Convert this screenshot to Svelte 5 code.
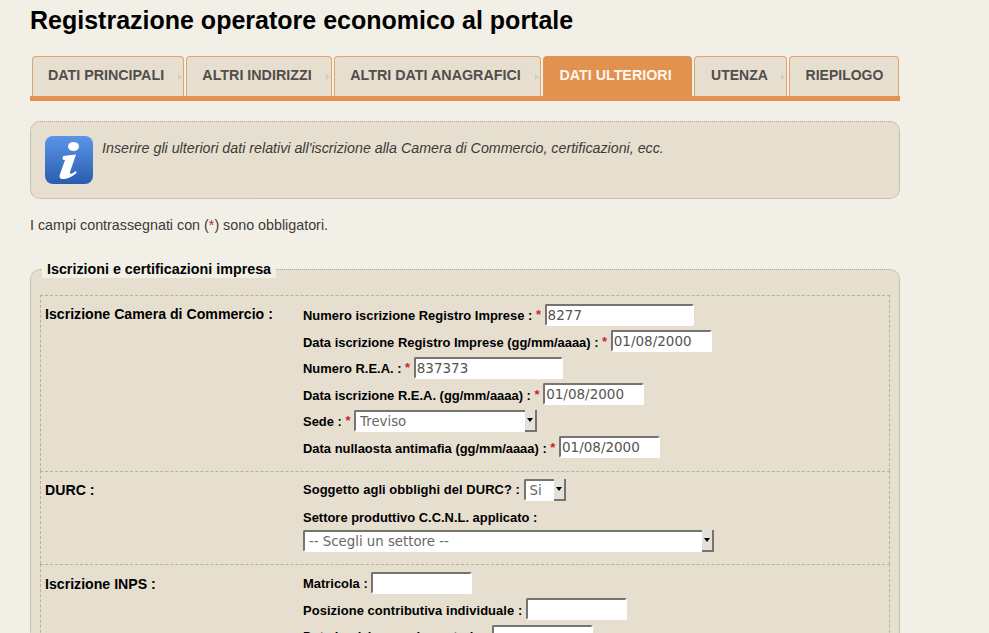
<script>
  const tabs = [
    { label: "DATI PRINCIPALI", w: 152 },
    { label: "ALTRI INDIRIZZI", w: 146 },
    { label: "ALTRI DATI ANAGRAFICI", w: 207 },
    { label: "DATI ULTERIORI", w: 149, active: true },
    { label: "UTENZA", w: 93 },
    { label: "RIEPILOGO", w: 110, last: true }
  ];
</script>

<div class="page">
  <h1>Registrazione operatore economico al portale</h1>

  <ul class="tabs">
    {#each tabs as t}
      <li class="tab" class:active={t.active} style="width:{t.w}px">
        {t.label}
        {#if !t.active && !t.last}<span class="arrow"></span>{/if}
      </li>
    {/each}
  </ul>

  <div class="info">
    <svg class="info-icon" width="48" height="48" viewBox="0 0 48 48">
      <defs>
        <linearGradient id="blue" x1="0" y1="0" x2="0" y2="1">
          <stop offset="0" stop-color="#5b95e8" />
          <stop offset="1" stop-color="#2a5cae" />
        </linearGradient>
      </defs>
      <rect width="48" height="48" rx="8" fill="url(#blue)" />
      <ellipse cx="28.5" cy="10.5" rx="5.5" ry="4.5" fill="#fff" />
      <path d="M18 20 L31 18.5 L25 36 Q24.5 38.5 27 37.5 L31 35 L31.5 37 Q24 43.5 17 43 Q13.5 42.5 15 38 L20 24 L17.5 23.5 Z" fill="#fff" />
    </svg>
    <p>Inserire gli ulteriori dati relativi all'iscrizione alla Camera di Commercio, certificazioni, ecc.</p>
  </div>

  <p class="note">I campi contrassegnati con (<span class="star">*</span>) sono obbligatori.</p>

  <fieldset>
    <legend>Iscrizioni e certificazioni impresa</legend>

    <div class="block first">
      <div class="title">Iscrizione Camera di Commercio :</div>
      <div class="fields">
        <div class="row"><b>Numero iscrizione Registro Imprese :</b> <span class="req">*</span> <input class="w150" value="8277" /></div>
        <div class="row"><b>Data iscrizione Registro Imprese (gg/mm/aaaa) :</b> <span class="req">*</span> <input class="w100" value="01/08/2000" /></div>
        <div class="row"><b>Numero R.E.A. :</b> <span class="req">*</span> <input class="w150" value="837373" /></div>
        <div class="row"><b>Data iscrizione R.E.A. (gg/mm/aaaa) :</b> <span class="req">*</span> <input class="w100" value="01/08/2000" /></div>
        <div class="row"><b>Sede :</b> <span class="req">*</span> <span class="select s-sede">Treviso<i class="btn"></i></span></div>
        <div class="row"><b>Data nullaosta antimafia (gg/mm/aaaa) :</b> <span class="req">*</span> <input class="w100" value="01/08/2000" /></div>
      </div>
    </div>

    <div class="block durc">
      <div class="title">DURC :</div>
      <div class="fields">
        <div class="row tall spaced"><b>Soggetto agli obblighi del DURC? :</b> <span class="select s-si">Si<i class="btn"></i></span></div>
        <div class="row short"><b>Settore produttivo C.C.N.L. applicato :</b></div>
        <div class="row"><span class="select s-wide">-- Scegli un settore --<i class="btn"></i></span></div>
      </div>
    </div>

    <div class="block inps">
      <div class="title">Iscrizione INPS :</div>
      <div class="fields">
        <div class="row"><b>Matricola :</b> <input class="w100" /></div>
        <div class="row spaced"><b>Posizione contributiva individuale :</b> <input class="w100" /></div>
        <div class="row"><b>Data iscrizione sede centrale :</b> <input class="w100" /></div>
      </div>
    </div>
  </fieldset>
</div>

<style>
  :global(body) {
    margin: 0;
    background: #f2efe7;
    overflow: hidden;
  }

  .page {
    height: 633px;
    overflow: hidden;
    box-sizing: border-box;
    width: 900px;
    padding: 5px 0 0 30px;
    font-family: "Liberation Sans", Arial, sans-serif;
    font-size: 14.3px;
    color: #3c3a37;
  }

  h1 {
    margin: 0;
    font-size: 25px;
    line-height: 30px;
    color: #000;
  }

  .tabs {
    display: flex;
    gap: 2px;
    list-style: none;
    margin: 21px 0 0;
    padding: 0 0 0 2px;
    border-bottom: 5px solid #e2914f;
    height: 40px;
  }

  .tab {
    position: relative;
    box-sizing: border-box;
    height: 40px;
    line-height: 37px;
    text-align: center;
    padding-right: 4px;
    border: 1px solid #e2a46f;
    border-bottom: 0;
    border-radius: 4px 4px 0 0;
    background: #e6dfcf;
    font-weight: bold;
    color: #514e4b;
    white-space: nowrap;
  }

  .tab:nth-child(5) {
    padding-right: 2px;
    font-size: 14px;
  }

  .tab:nth-child(6) {
    padding-right: 0;
    padding-left: 1px;
    font-size: 14px;
  }

  .tab.active {
    background: #e2914f;
    border-color: #e2914f;
    color: #fdf6ea;
  }

  .arrow {
    position: absolute;
    right: 1px;
    top: 17px;
    border-left: 4px solid #d2cdc4;
    border-top: 3px solid transparent;
    border-bottom: 3px solid transparent;
  }

  .info {
    display: flex;
    gap: 9px;
    box-sizing: border-box;
    height: 78px;
    margin-top: 20px;
    padding: 14px 14px;
    background: #e6dfcf;
    border: 1px dotted #a8a294;
    border-radius: 10px;
  }

  .info-icon {
    flex: none;
  }

  .info p {
    margin: 4px 0 0;
    font-size: 14.25px;
    font-style: italic;
    line-height: 16px;
    color: #3c3a37;
  }

  .note {
    margin: 18px 0 0;
    line-height: 16px;
  }

  .star {
    color: #c8242b;
  }

  fieldset {
    margin: 27px 0 0;
    padding: 0 9px;
    min-width: 0;
    background: #e6dfcf;
    border: 1px dotted #a8a294;
    border-radius: 10px;
  }

  legend {
    margin-left: 2px;
    padding: 0 5px;
    background: #f2efe7;
    font-weight: bold;
    line-height: 18px;
    color: #000;
  }

  .block {
    display: flex;
    box-sizing: border-box;
    border: 1px dashed #b5af9f;
    border-bottom: 0;
    padding: 0 4px;
  }

  .first {
    margin-top: 17px;
    height: 176px;
    padding-top: 7px;
  }

  .durc {
    height: 93px;
    padding-top: 5px;
  }

  .inps {
    height: 200px;
    padding-top: 6px;
  }

  .title {
    flex: none;
    width: 258px;
    margin-top: 4px;
    font-size: 14.15px;
    font-weight: bold;
    color: #000;
    line-height: 18px;
  }

  .first .title {
    margin-top: 2px;
  }

  .fields {
    font-size: 12.95px;
    color: #000;
  }

  .row {
    height: 26.5px;
    line-height: 24px;
    white-space: nowrap;
  }

  .row b {
    vertical-align: -1px;
  }

  .row.tall {
    height: 28px;
  }

  .row.short {
    height: 24px;
  }

  .row.spaced b {
    letter-spacing: 0.06px;
  }

  .req {
    color: #c8242b;
    font-weight: bold;
  }

  input, .select {
    box-sizing: border-box;
    display: inline-block;
    height: 22px;
    margin-bottom: 2px;
    padding: 0 1px;
    vertical-align: middle;
    background: #fff;
    border: 2px solid;
    border-color: #767470 #fff #fff #767470;
    border-radius: 2px;
    font-family: "DejaVu Sans", sans-serif;
    font-size: 13.5px;
    color: #55534f;
    outline: none;
  }

  .w150 {
    width: 149px;
  }

  .w100 {
    width: 101px;
  }

  .select {
    position: relative;
    font-size: 13.3px;
    line-height: 19px;
    padding-left: 4px;
    color: #6a6864;
  }

  .s-sede {
    width: 183px;
  }

  .s-si {
    width: 42px;
    margin-bottom: 0;
  }

  .s-wide {
    width: 411px;
  }

  .btn {
    position: absolute;
    right: -2px;
    top: -2px;
    bottom: -2px;
    width: 12px;
    box-sizing: border-box;
    background: #e4e1da;
    border-right: 2px solid #767470;
    border-bottom: 2px solid #767470;
  }

  .btn::after {
    content: "";
    position: absolute;
    left: 2px;
    top: 8px;
    border-top: 4px solid #000;
    border-left: 3px solid transparent;
    border-right: 3px solid transparent;
  }
</style>
